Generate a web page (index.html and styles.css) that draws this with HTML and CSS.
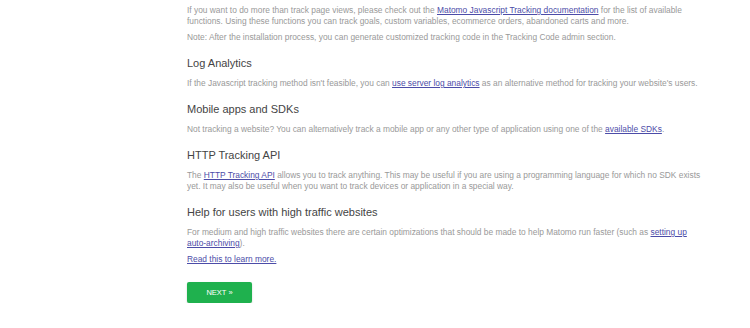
FILE: index.html
```html
<!DOCTYPE html>
<html lang="en">
<head>
    <meta charset="UTF-8">
    <title>Matomo Installation - Tracking Code</title>
    <link rel="stylesheet" href="styles.css">
</head>
<body>

    <div class="content">
        <p>If you want to do more than track page views, please check out the <a href="#">Matomo Javascript Tracking documentation</a> for the list of available functions. Using these functions you can track goals, custom variables, ecommerce orders, abandoned carts and more.</p>
        <p>Note: After the installation process, you can generate customized tracking code in the Tracking Code admin section.</p>

        <h3>Log Analytics</h3>
        <p>If the Javascript tracking method isn't feasible, you can <a href="#">use server log analytics</a> as an alternative method for tracking your website's users.</p>

        <h3>Mobile apps and SDKs</h3>
        <p>Not tracking a website? You can alternatively track a mobile app or any other type of application using one of the <a href="#">available SDKs</a>.</p>

        <h3>HTTP Tracking API</h3>
        <p>The <a href="#">HTTP Tracking API</a> allows you to track anything. This may be useful if you are using a programming language for which no SDK exists yet. It may also be useful when you want to track devices or application in a special way.</p>

        <h3>Help for users with high traffic websites</h3>
        <p>For medium and high traffic websites there are certain optimizations that should be made to help Matomo run faster (such as <a href="#">setting up auto-archiving</a>).</p>
        <p><a href="#">Read this to learn more.</a></p>

        <button class="next-button">NEXT &raquo;</button>
    </div>

</body>
</html>
```

FILE: styles.css
```css
body {
    font-family: "Liberation Sans", Arial, sans-serif;
    margin: 0;
    padding: 0;
    background-color: #fff;
    color: #999;
}

.content {
    width: 514px;
    margin-left: 187px;
    padding-top: 5px;
}

.content p {
    font-size: 8.4px;
    line-height: 11px;
    margin: 0 0 5px 0;
}

.content a {
    color: #4c4ca8;
    text-decoration: underline;
}

.content h3 {
    font-size: 11px;
    font-weight: 400;
    color: #444;
    margin: 12px 0 7px 0;
    line-height: 16px;
}

.next-button {
    margin-top: 12px;
    width: 65px;
    height: 21px;
    background-color: #1fb14e;
    color: #fff;
    border: none;
    border-radius: 2px;
    font-family: "Liberation Sans", Arial, sans-serif;
    font-size: 7.5px;
    box-shadow: 0 1px 2px rgba(0, 0, 0, 0.2);
    cursor: pointer;
}
```
